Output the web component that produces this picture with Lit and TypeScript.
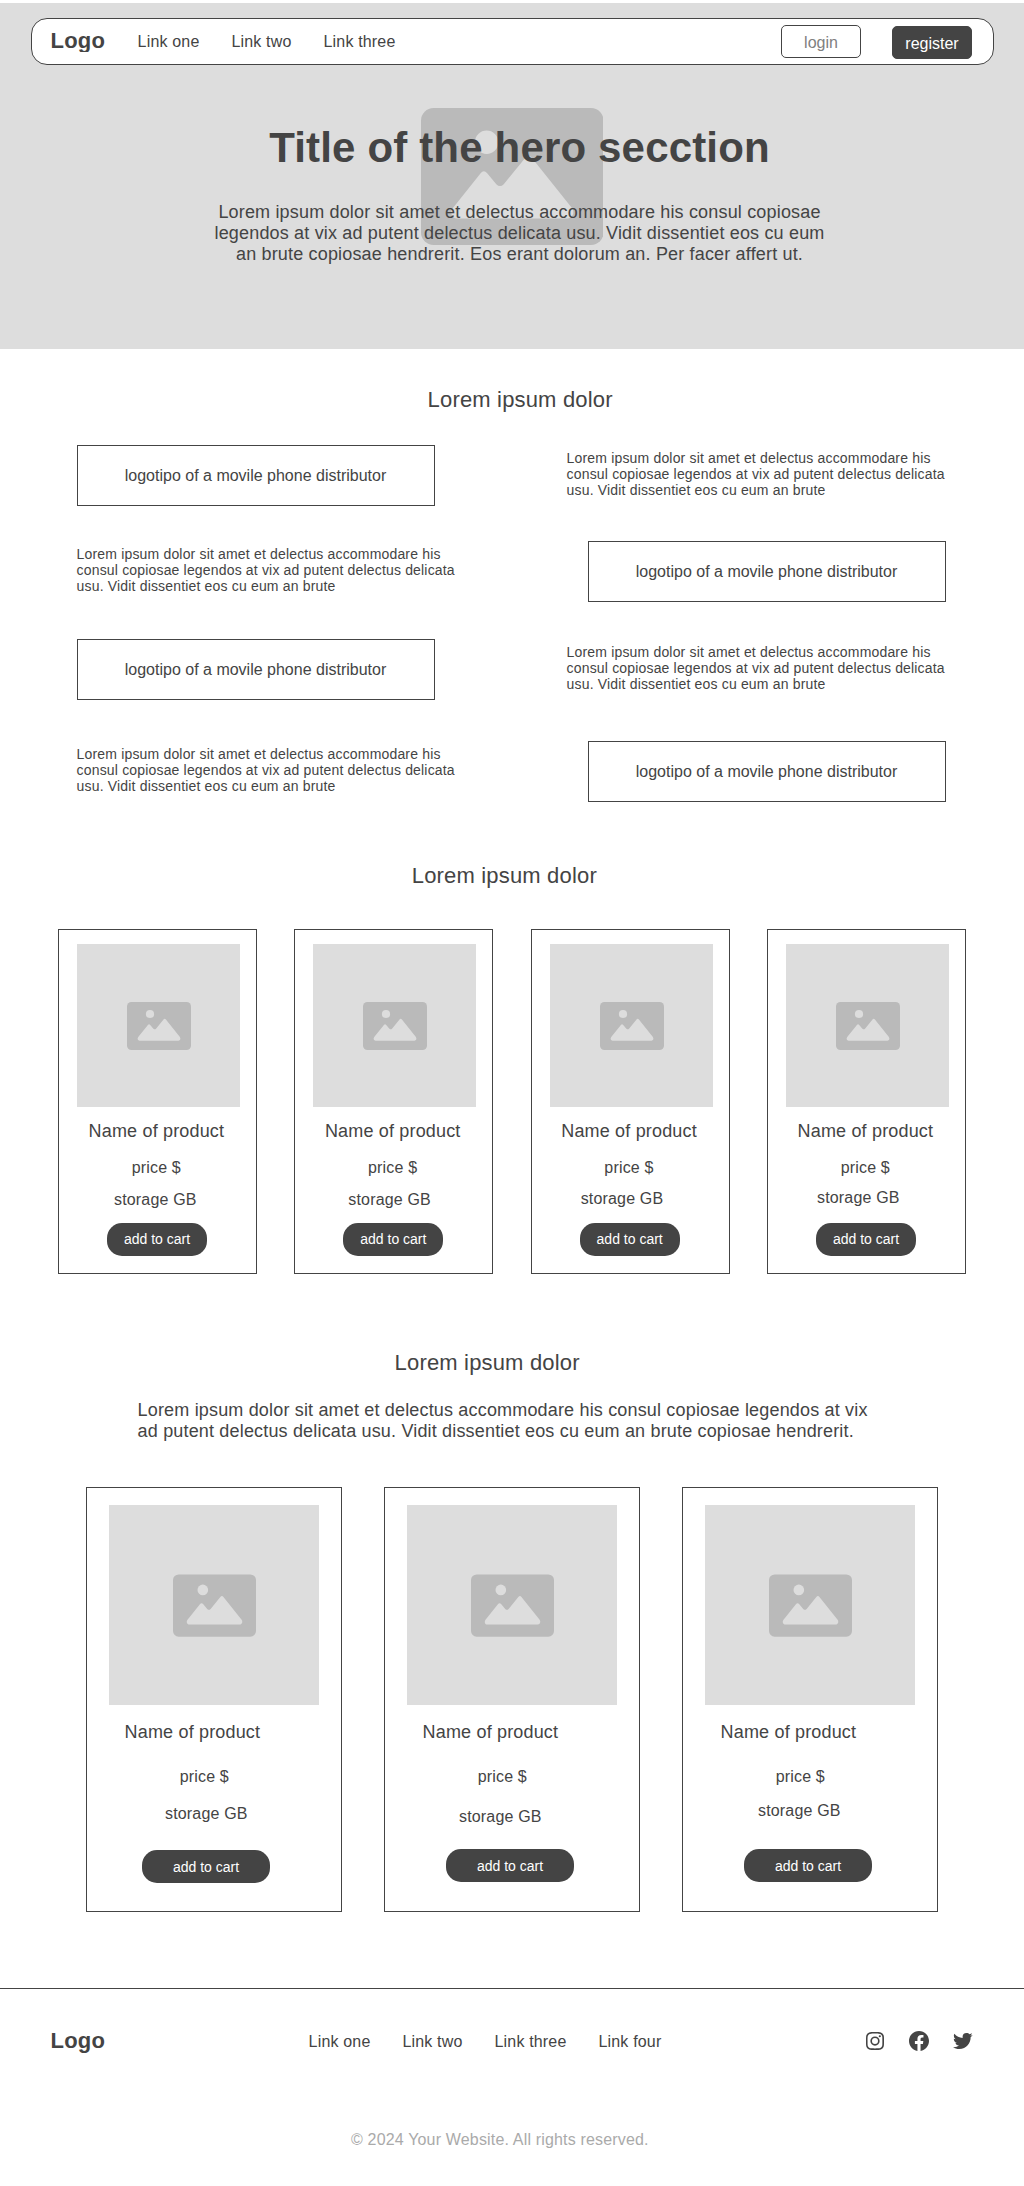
import { LitElement, html, css, svg } from "lit";
import { customElement, property } from "lit/decorators.js";
import { styleMap } from "lit/directives/style-map.js";

interface Product {
  storageX: number;
  storageY: number;
  buttonX: number;
  buttonY: number;
}

const BLURB =
  "Lorem ipsum dolor sit amet et delectus accommodare his consul copiosae legendos at vix ad putent delectus delicata usu. Vidit dissentiet eos cu eum an brute";

const SMALL_PRODUCTS: Product[] = [
  { storageX: 56, storageY: 15, buttonX: 49, buttonY: 0 },
  { storageX: 54, storageY: 15, buttonX: 49, buttonY: 0 },
  { storageX: 50, storageY: 14, buttonX: 49, buttonY: 0 },
  { storageX: 50, storageY: 13, buttonX: 49, buttonY: 0 },
];

const LARGE_PRODUCTS: Product[] = [
  { storageX: 79, storageY: 20, buttonX: 56, buttonY: 1 },
  { storageX: 75, storageY: 23, buttonX: 62, buttonY: 0 },
  { storageX: 76, storageY: 17, buttonX: 62, buttonY: 0 },
];

@customElement("picture-mark")
class PictureMark extends LitElement {
  static styles = css`
    :host { display: block; }
    svg { display: block; width: 100%; height: 100%; }
  `;
  render() {
    return html`<svg viewBox="0 0 64 48" aria-hidden="true">
      <rect width="64" height="48" rx="4.4" fill="#bababa"></rect>
      <circle cx="23" cy="12" r="4.1" fill="#ddd"></circle>
      <path
        fill="#ddd"
        d="M12.6 38.7C10.8 38.7 10 36.6 11.2 35L20.9 22.9Q22 21.5 23.2 22.9L26.4 26.7Q27.7 28 29 26.7L36.5 17.5Q37.7 16 38.9 17.5L52.9 35C54 36.6 53.2 38.7 51.4 38.7Z"
      ></path>
    </svg>`;
  }
}

@customElement("product-card")
class ProductCard extends LitElement {
  @property({ attribute: false }) product!: Product;
  @property({ type: Boolean, reflect: true }) large = false;

  static styles = css`
    :host {
      display: block;
      box-sizing: border-box;
      width: 199px;
      height: 345px;
      border: 1px solid #444;
      padding: 14px 0 0 18px;
    }
    .photo {
      width: 163px;
      height: 163px;
      display: flex;
      align-items: center;
      justify-content: center;
      background: #ddd;
    }
    .mark { width: 64px; height: 48px; margin: 1px 0 0 1px; }
    .name { font-size: 18px; line-height: 20px; margin: 14px 0 0 11.6px; }
    .price { font-size: 16px; line-height: 17px; margin: 18px 0 0 54.7px; }
    .slot { height: 47px; box-sizing: border-box; margin-left: -19px; }
    .storage { font-size: 16px; line-height: 17px; }
    .cart {
      display: block;
      box-sizing: border-box;
      width: 100px;
      height: 33px;
      margin: 0;
      padding: 0 0 1px;
      border: 0;
      border-radius: 15px;
      background: #444;
      color: #fff;
      font: 14px/16px "Liberation Sans", Arial, sans-serif;
    }
    :host([large]) { width: 256px; height: 425px; padding: 17px 0 0 22px; }
    :host([large]) .photo { width: 210px; height: 200px; }
    :host([large]) .mark { width: 83px; height: 63px; margin: 0; }
    :host([large]) .name { margin: 17px 0 0 15.6px; }
    :host([large]) .price { margin: 26px 0 0 70.7px; }
    :host([large]) .slot { height: 64px; margin-left: -23px; }
    :host([large]) .cart { width: 128px; padding: 1px 0 0; }
  `;

  render() {
    const p = this.product;
    return html`
      <div class="photo"><picture-mark class="mark"></picture-mark></div>
      <div class="name">Name of product</div>
      <div class="price">price $</div>
      <div class="slot" style=${styleMap({ padding: `${p.storageY}px 0 0 ${p.storageX}px` })}>
        <div class="storage">storage GB</div>
      </div>
      <button
        class="cart"
        style=${styleMap({ marginLeft: `${p.buttonX - (this.large ? 23 : 19)}px`, marginTop: `${p.buttonY}px` })}
      >add to cart</button>
    `;
  }
}

const instagram = svg`
  <path d="M11.999 7.377a4.623 4.623 0 1 0 0 9.248 4.623 4.623 0 0 0 0-9.248zm0 7.627a3.004 3.004 0 1 1 0-6.008 3.004 3.004 0 0 1 0 6.008z"/>
  <circle cx="16.806" cy="7.207" r="1.078"/>
  <path d="M20.533 6.111A4.605 4.605 0 0 0 17.9 3.479a6.606 6.606 0 0 0-2.186-.42c-.963-.042-1.268-.054-3.71-.054s-2.755 0-3.71.054a6.554 6.554 0 0 0-2.184.42 4.6 4.6 0 0 0-2.633 2.632 6.585 6.585 0 0 0-.419 2.186c-.043.962-.056 1.267-.056 3.71 0 2.442 0 2.753.056 3.71.015.748.156 1.486.419 2.187a4.61 4.61 0 0 0 2.634 2.632 6.584 6.584 0 0 0 2.185.45c.963.042 1.268.055 3.71.055s2.755 0 3.71-.055a6.615 6.615 0 0 0 2.186-.419 4.613 4.613 0 0 0 2.633-2.633c.263-.7.404-1.438.419-2.186.043-.962.056-1.267.056-3.71s0-2.753-.056-3.71a6.581 6.581 0 0 0-.421-2.217zm-1.218 9.532a5.043 5.043 0 0 1-.311 1.688 2.987 2.987 0 0 1-1.712 1.711 4.985 4.985 0 0 1-1.67.311c-.95.044-1.218.055-3.654.055-2.438 0-2.687 0-3.655-.055a4.96 4.96 0 0 1-1.669-.311 2.985 2.985 0 0 1-1.719-1.711 5.08 5.08 0 0 1-.311-1.669c-.043-.95-.053-1.218-.053-3.654 0-2.437 0-2.686.053-3.655a5.038 5.038 0 0 1 .311-1.687c.305-.789.93-1.41 1.719-1.712a5.01 5.01 0 0 1 1.669-.311c.951-.043 1.218-.055 3.655-.055s2.687 0 3.654.055a4.96 4.96 0 0 1 1.67.311 2.991 2.991 0 0 1 1.712 1.712 5.08 5.08 0 0 1 .311 1.669c.043.951.055 1.218.055 3.655 0 2.436 0 2.698-.043 3.654h-.011z"/>`;
const facebook = svg`<path d="M12.001 2.002c-5.522 0-9.999 4.477-9.999 9.999 0 4.99 3.656 9.126 8.437 9.879v-6.988h-2.54v-2.891h2.54V9.798c0-2.508 1.493-3.891 3.776-3.891 1.094 0 2.24.195 2.24.195v2.459h-1.264c-1.24 0-1.628.772-1.628 1.563v1.875h2.771l-.443 2.891h-2.328v6.988C18.344 21.129 22 16.992 22 12.001c0-5.522-4.477-9.999-9.999-9.999z"/>`;
const twitter = svg`<path d="M19.633 7.997c.013.175.013.349.013.523 0 5.325-4.053 11.461-11.46 11.461-2.282 0-4.402-.661-6.186-1.809.324.037.636.05.973.05a8.07 8.07 0 0 0 5.001-1.721 4.036 4.036 0 0 1-3.767-2.793c.249.037.499.062.761.062.361 0 .724-.05 1.061-.137a4.027 4.027 0 0 1-3.23-3.953v-.05c.537.299 1.16.486 1.82.511a4.022 4.022 0 0 1-1.796-3.354c0-.748.199-1.434.548-2.032a11.457 11.457 0 0 0 8.306 4.215c-.062-.3-.1-.611-.1-.923a4.026 4.026 0 0 1 4.028-4.028c1.16 0 2.207.486 2.943 1.272a7.957 7.957 0 0 0 2.556-.973 4.02 4.02 0 0 1-1.771 2.22 8.073 8.073 0 0 0 2.319-.624 8.645 8.645 0 0 1-2.019 2.083z"/>`;

@customElement("app-root")
class AppRoot extends LitElement {
  static styles = css`
    :host {
      display: block;
      box-sizing: border-box;
      width: 1024px;
      height: 2186px;
      padding-top: 3px;
      overflow: hidden;
      background: #fff;
      color: #444;
      font: 16px/17px "Liberation Sans", Arial, sans-serif;
      letter-spacing: 0.17px;
    }
    h1, h2, p { margin: 0; font-weight: 400; }
    .hero {
      position: relative;
      height: 346px;
      box-sizing: border-box;
      padding-top: 15px;
      background: #ddd;
    }
    .hero-mark {
      position: absolute;
      left: 420.7px;
      top: 105px;
      width: 182.6px;
      height: 137px;
    }
    .bar {
      position: relative;
      display: flex;
      align-items: flex-start;
      box-sizing: border-box;
      width: 963px;
      height: 47px;
      margin-left: 31px;
      padding: 0 21px 0 18.6px;
      border: 1px solid #444;
      border-radius: 16px;
      background: #fff;
    }
    .logo { width: 55px; font-size: 22px; line-height: 25px; font-weight: 700; }
    .bar .logo { margin-top: 9px; height: 24px; overflow: hidden; }
    .links { display: flex; gap: 32px; }
    .bar .links { margin: 14px auto 0 32px; }
    .btn {
      box-sizing: border-box;
      width: 80px;
      height: 33px;
      padding: 2px 0 0;
      border: 1px solid #444;
      border-radius: 5px;
      font: 16px/17px "Liberation Sans", Arial, sans-serif;
    }
    .login { margin: 6px 31px 0 0; background: #fff; color: #808080; }
    .register { margin-top: 7px; background: #444; color: #fff; }
    .title {
      position: relative;
      width: 640px;
      margin: 59px 0 0 199.5px;
      font-size: 42px;
      line-height: 47px;
      font-weight: 700;
      text-align: center;
    }
    .lead {
      position: relative;
      width: 640px;
      margin: 31px 0 0 199.5px;
      font-size: 18px;
      line-height: 21px;
      text-align: center;
    }
    .heading { font-size: 22px; line-height: 25px; }
    .partners { padding: 38px 78px 0 77px; }
    .partners .heading { margin-left: 350.6px; }
    .row {
      display: flex;
      justify-content: space-between;
      height: 61px;
      margin-bottom: 35px;
    }
    .row:nth-of-type(2) { margin-bottom: 37px; }
    .row:nth-of-type(3) { margin-bottom: 41px; }
    .row:nth-of-type(1) { margin-top: 33px; }
    .brand {
      box-sizing: border-box;
      width: 358px;
      height: 61px;
      padding-right: 1px;
      border: 1px solid #444;
      display: flex;
      align-items: center;
      justify-content: center;
      letter-spacing: 0;
    }
    .blurb {
      width: 381px;
      margin: 5px -1.6px 0 -0.4px;
      font-size: 14px;
      line-height: 16px;
    }
    .featured { padding: 26px 58px 0; }
    .featured .heading { margin-left: 353.8px; }
    .cards { display: flex; justify-content: space-between; }
    .featured .cards { margin-top: 41px; }
    .catalog { padding: 76px 86px 0; }
    .catalog .heading { margin-left: 308.6px; }
    .intro { width: 750px; margin: 25px 0 0 51.6px; font-size: 18px; line-height: 21px; }
    .catalog .cards { margin-top: 45px; }
    .footer { margin-top: 76px; border-top: 1px solid #444; padding-top: 39px; }
    .foot-row { display: flex; align-items: flex-start; height: 25px; padding: 0 49px 0 50.6px; }
    .foot-row .links { margin: 5px auto 0 203px; }
    .social { display: flex; gap: 20px; margin-top: 1px; }
    .icon { display: block; width: 24px; height: 24px; fill: #444; }
    .copy { margin: 78px 0 0 351px; color: #aaa; }
  `;

  private row(flip: boolean) {
    const brand = html`<div class="brand">logotipo of a movile phone distributor</div>`;
    const blurb = html`<p class="blurb">${BLURB}</p>`;
    return html`<div class="row">${flip ? [blurb, brand] : [brand, blurb]}</div>`;
  }

  render() {
    return html`
      <section class="hero">
        <picture-mark class="hero-mark"></picture-mark>
        <header class="bar">
          <div class="logo">Logo</div>
          <nav class="links"><span>Link one</span><span>Link two</span><span>Link three</span></nav>
          <button class="btn login">login</button>
          <button class="btn register">register</button>
        </header>
        <h1 class="title">Title of the hero secction</h1>
        <p class="lead">
          Lorem ipsum dolor sit amet et delectus accommodare his consul copiosae<br />legendos
          at vix ad putent delectus delicata usu. Vidit dissentiet eos cu eum<br />an brute
          copiosae hendrerit. Eos erant dolorum an. Per facer affert ut.
        </p>
      </section>
      <section class="partners">
        <h2 class="heading">Lorem ipsum dolor</h2>
        ${[false, true, false, true].map((flip) => this.row(flip))}
      </section>
      <section class="featured">
        <h2 class="heading">Lorem ipsum dolor</h2>
        <div class="cards">
          ${SMALL_PRODUCTS.map((p) => html`<product-card .product=${p}></product-card>`)}
        </div>
      </section>
      <section class="catalog">
        <h2 class="heading">Lorem ipsum dolor</h2>
        <p class="intro">
          Lorem ipsum dolor sit amet et delectus accommodare his consul copiosae legendos at vix<br />ad
          putent delectus delicata usu. Vidit dissentiet eos cu eum an brute copiosae hendrerit.
        </p>
        <div class="cards">
          ${LARGE_PRODUCTS.map((p) => html`<product-card large .product=${p}></product-card>`)}
        </div>
      </section>
      <footer class="footer">
        <div class="foot-row">
          <div class="logo">Logo</div>
          <nav class="links">
            <span>Link one</span><span>Link two</span><span>Link three</span><span>Link four</span>
          </nav>
          <div class="social">
            ${[instagram, facebook, twitter].map(
              (glyph) => html`<svg class="icon" viewBox="0 0 24 24" aria-hidden="true">${glyph}</svg>`
            )}
          </div>
        </div>
        <p class="copy">© 2024 Your Website. All rights reserved.</p>
      </footer>
    `;
  }
}
